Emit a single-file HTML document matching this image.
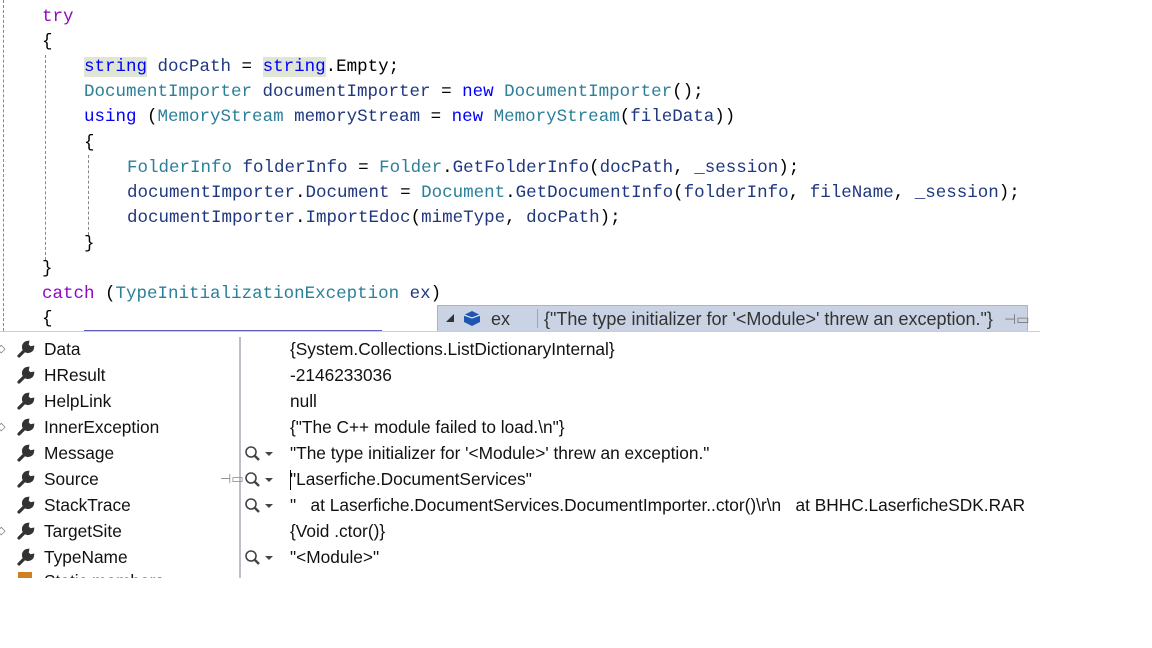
<!DOCTYPE html>
<html><head><meta charset="utf-8"><style>
body{margin:0;width:1152px;height:648px;background:#fff;position:relative;overflow:hidden}
.c{position:absolute;font-family:"Liberation Mono",monospace;font-size:17.5px;line-height:25px;white-space:pre;color:#1f377f}
.k{color:#0000ff}.p{color:#8f08c4}.t{color:#2b7f99}.x{color:#000}
.hl{background:#dfe6d6}
.g{position:absolute;width:0;border-left:1px dashed #888}
.r{position:absolute;font-family:"Liberation Sans",sans-serif;font-size:17.3px;color:#111;white-space:pre;line-height:26px}
.w{position:absolute;left:16px;width:20px;height:20px}
.mg{position:absolute;left:244px}
</style></head><body>
<div class="g" style="left:3px;top:0;height:331px"></div>
<div class="g" style="left:45px;top:55px;height:205px"></div>
<div class="g" style="left:88px;top:155px;height:80px"></div>
<div class="c" style="left:42px;top:5px"><span class="p">try</span></div>
<div class="c x" style="left:42px;top:30px">{</div>
<div class="c" style="left:84px;top:55px"><span class="k hl">string</span> docPath <span class="x">=</span> <span class="k hl">string</span><span class="x">.Empty;</span></div>
<div class="c" style="left:84px;top:80px"><span class="t">DocumentImporter</span> documentImporter <span class="x">=</span> <span class="k">new</span> <span class="t">DocumentImporter</span><span class="x">();</span></div>
<div class="c" style="left:84px;top:105px"><span class="k">using</span> <span class="x">(</span><span class="t">MemoryStream</span> memoryStream <span class="x">=</span> <span class="k">new</span> <span class="t">MemoryStream</span><span class="x">(</span>fileData<span class="x">))</span></div>
<div class="c x" style="left:84px;top:131px">{</div>
<div class="c" style="left:127px;top:156px"><span class="t">FolderInfo</span> folderInfo <span class="x">=</span> <span class="t">Folder</span><span class="x">.</span>GetFolderInfo<span class="x">(</span>docPath<span class="x">,</span> _session<span class="x">);</span></div>
<div class="c" style="left:127px;top:181px">documentImporter<span class="x">.</span>Document <span class="x">=</span> <span class="t">Document</span><span class="x">.</span>GetDocumentInfo<span class="x">(</span>folderInfo<span class="x">,</span> fileName<span class="x">,</span> _session<span class="x">);</span></div>
<div class="c" style="left:127px;top:206px">documentImporter<span class="x">.</span>ImportEdoc<span class="x">(</span>mimeType<span class="x">,</span> docPath<span class="x">);</span></div>
<div class="c x" style="left:84px;top:232px">}</div>
<div class="c x" style="left:42px;top:257px">}</div>
<div class="c" style="left:42px;top:282px"><span class="p">catch</span> <span class="x">(</span><span class="t">TypeInitializationException</span> ex<span class="x">)</span></div>
<div class="c x" style="left:42px;top:307px">{</div>
<div style="position:absolute;left:84px;top:330px;width:298px;height:2px;background:#5c5cc0"></div>
<div style="position:absolute;left:437px;top:305px;width:591px;height:27px;background:#c9d3e3;border:1px solid #a8b4c8;box-sizing:border-box"></div>
<div style="position:absolute;left:446px;top:314px;width:0;height:0;border-left:8px solid transparent;border-bottom:8px solid #333"></div>
<svg style="position:absolute;left:462px;top:309px" width="20" height="18"><path d="M2 6 L10 2 L18 6 L18 13 L10 17 L2 13Z" fill="#1e56b0"/><path d="M2 6 L10 9 L18 6" stroke="#fff" fill="none" stroke-width="1"/></svg>
<div class="r" style="left:491px;top:306px;color:#333;font-size:18px">ex</div>
<div style="position:absolute;left:537px;top:309px;width:1px;height:19px;background:#9aa"></div>
<div class="r" style="left:544px;top:306px;color:#333;font-size:18px">{"The type initializer for '&lt;Module&gt;' threw an exception."}</div>
<div class="r" style="left:1004px;top:306px;color:#777;font-size:14px">⊣▭</div>
<div style="position:absolute;left:0;top:331px;width:1040px;height:247px;background:#fff;border-top:1px solid #ccd"></div>
<div style="position:absolute;left:239px;top:337px;width:2px;height:241px;background:#bcc0c6"></div>
<div class="r" style="left:44px;top:336px">Data</div>
<div class="r" style="left:44px;top:362px">HResult</div>
<div class="r" style="left:44px;top:388px">HelpLink</div>
<div class="r" style="left:44px;top:414px">InnerException</div>
<div class="r" style="left:44px;top:440px">Message</div>
<div class="r" style="left:44px;top:466px">Source</div>
<div class="r" style="left:44px;top:492px">StackTrace</div>
<div class="r" style="left:44px;top:518px">TargetSite</div>
<div class="r" style="left:44px;top:544px">TypeName</div>
<div class="r" style="left:44px;top:568px;height:10px;overflow:hidden">Static members</div>
<div style="position:absolute;left:0;top:578px;width:1152px;height:70px;background:#fff"></div>
<div class="r" style="left:290px;top:336px">{System.Collections.ListDictionaryInternal}</div>
<div class="r" style="left:290px;top:362px">-2146233036</div>
<div class="r" style="left:290px;top:388px">null</div>
<div class="r" style="left:290px;top:414px">{"The C++ module failed to load.\n"}</div>
<div class="r" style="left:290px;top:440px">"The type initializer for '&lt;Module&gt;' threw an exception."</div>
<div class="r" style="left:290px;top:466px">"Laserfiche.DocumentServices"</div>
<div style="position:absolute;left:290px;top:470px;width:1px;height:20px;background:#000"></div>
<div class="r" style="left:290px;top:492px">"   at Laserfiche.DocumentServices.DocumentImporter..ctor()\r\n   at BHHC.LaserficheSDK.RAR</div>
<div class="r" style="left:290px;top:518px">{Void .ctor()}</div>
<div class="r" style="left:290px;top:544px">"&lt;Module&gt;"</div>
<div class="r" style="left:220px;top:466px;color:#888;font-size:13px">⊣▭</div>
<svg width="0" height="0" style="position:absolute"><defs>
<g id="wr"><path d="M3 17 L10 10 M11.5 3.5 A4.5 4.5 0 1 0 16.5 8.5 L14 9 L11 6 Z" stroke="#333" stroke-width="3.2" fill="#333" stroke-linecap="round"/></g>
<g id="mg"><circle cx="7" cy="7" r="5" stroke="#444" stroke-width="1.6" fill="none"/><path d="M10.5 10.5 L15 15" stroke="#444" stroke-width="2.4"/><path d="M21 7 L29 7 L25 11Z" fill="#444"/></g>
</defs></svg>
<svg class="w" style="top:339px"><use href="#wr"/></svg>
<svg class="w" style="top:365px"><use href="#wr"/></svg>
<svg class="w" style="top:391px"><use href="#wr"/></svg>
<svg class="w" style="top:417px"><use href="#wr"/></svg>
<svg class="w" style="top:443px"><use href="#wr"/></svg>
<svg class="w" style="top:469px"><use href="#wr"/></svg>
<svg class="w" style="top:495px"><use href="#wr"/></svg>
<svg class="w" style="top:521px"><use href="#wr"/></svg>
<svg class="w" style="top:547px"><use href="#wr"/></svg>
<div style="position:absolute;left:18px;top:572px;width:14px;height:6px;background:#d08020"></div>
<svg class="mg" style="top:445px" width="32" height="18"><use href="#mg"/></svg>
<svg class="mg" style="top:471px" width="32" height="18"><use href="#mg"/></svg>
<svg class="mg" style="top:497px" width="32" height="18"><use href="#mg"/></svg>
<svg class="mg" style="top:549px" width="32" height="18"><use href="#mg"/></svg>
<div class="r" style="left:-3px;top:336px;color:#666;font-size:11px">◇</div>
<div class="r" style="left:-3px;top:414px;color:#666;font-size:11px">◇</div>
<div class="r" style="left:-3px;top:518px;color:#666;font-size:11px">◇</div>
</body></html>
